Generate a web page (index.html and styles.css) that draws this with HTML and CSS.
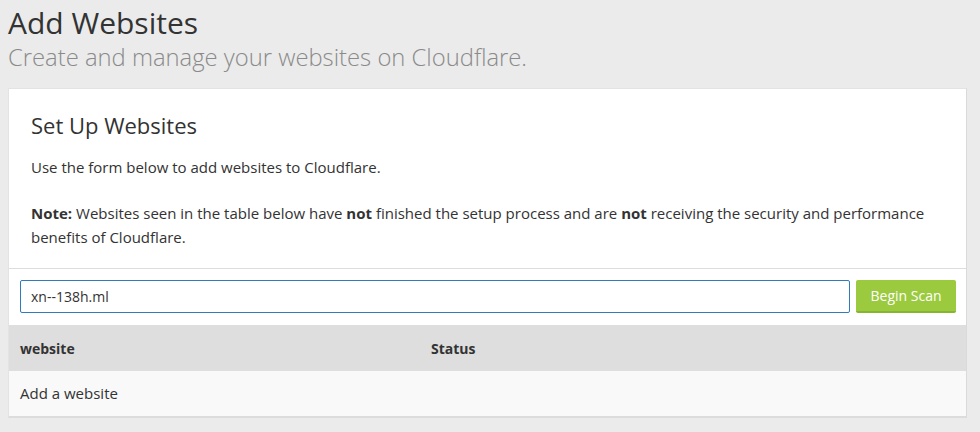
FILE: index.html
```html
<!DOCTYPE html>
<html lang="en">
<head>
<meta charset="utf-8">
<title>Add Websites</title>
<link rel="stylesheet" href="styles.css">
</head>
<body>
<div class="page">
  <header class="page-header">
    <h1 class="page-title">Add Websites</h1>
    <p class="page-subtitle">Create and manage your websites on Cloudflare.</p>
  </header>
  <section class="card">
    <div class="card-intro">
      <h2 class="card-title">Set Up Websites</h2>
      <p class="card-text">Use the form below to add websites to Cloudflare.</p>
      <p class="card-text"><strong>Note:</strong> Websites seen in the table below have <strong>not</strong> finished the setup process and are <strong>not</strong> receiving the security and performance benefits of Cloudflare.</p>
    </div>
    <form class="scan-form">
      <input class="scan-input" type="text" value="xn--138h.ml">
      <button class="scan-button" type="button">Begin Scan</button>
    </form>
    <div class="table">
      <div class="table-head">
        <div class="cell">website</div>
        <div class="cell">Status</div>
      </div>
      <div class="table-row">
        <div class="cell">Add a website</div>
        <div class="cell"></div>
      </div>
    </div>
  </section>
</div>
</body>
</html>
```

FILE: styles.css
```css
html, body {
  margin: 0;
  padding: 0;
  background: #ebebeb;
}
body {
  font-family: "Open Sans", "Noto Sans", sans-serif;
  color: #333;
}
.page {
  padding: 5px 13px 0 8px;
}
.page-title {
  margin: 0;
  font-size: 30px;
  line-height: 36px;
  font-weight: 400;
  color: #333;
}
.page-subtitle {
  margin: 2px 0 0;
  font-size: 23.8px;
  line-height: 28px;
  font-weight: 300;
  color: #8a8a8a;
}
.card {
  margin-top: 17px;
  background: #fff;
  border: 1px solid #e3e3e3;
  border-bottom: 2px solid #dcdcdc;
  border-right: 1px solid #dadada;
}
.card-intro {
  padding: 22px 22px 19px;
  border-bottom: 1px solid #dddddd;
}
.card-title {
  margin: 0 0 16px;
  font-size: 22px;
  line-height: 28px;
  font-weight: 400;
  color: #333;
}
.card-text {
  margin: 0 0 22px;
  font-size: 15px;
  line-height: 24px;
  color: #333;
}
.card-text:last-child {
  margin-bottom: 0;
}
.card-text strong {
  font-weight: 700;
}
.scan-form {
  display: flex;
  gap: 6px;
  padding: 11px 10px 12px 11px;
  margin: 0;
}
.scan-input {
  flex: 1;
  box-sizing: border-box;
  height: 33px;
  margin: 0;
  padding: 0 10px;
  border: 1px solid #2f7bbf;
  border-radius: 2px;
  font-family: "Open Sans", "Noto Sans", sans-serif;
  font-size: 14px;
  color: #333;
  background: #fff;
  outline: none;
}
.scan-button {
  box-sizing: border-box;
  width: 100px;
  height: 33px;
  margin: 0;
  padding: 0;
  border: none;
  border-bottom: 2px solid #86b52f;
  border-radius: 2px;
  background: #9bca3e;
  color: #fff;
  font-family: "Open Sans", "Noto Sans", sans-serif;
  font-size: 14px;
}
.table-head,
.table-row {
  display: grid;
  grid-template-columns: 411px 1fr;
  padding: 0 11px;
  align-items: center;
}
.table-head {
  height: 46px;
  background: #dedede;
  font-size: 14px;
  font-weight: 700;
  color: #333;
}
.table-row {
  height: 45px;
  padding-bottom: 1px;
  box-sizing: border-box;
  background: #f9f9f9;
  font-size: 15px;
  color: #333;
}
```
